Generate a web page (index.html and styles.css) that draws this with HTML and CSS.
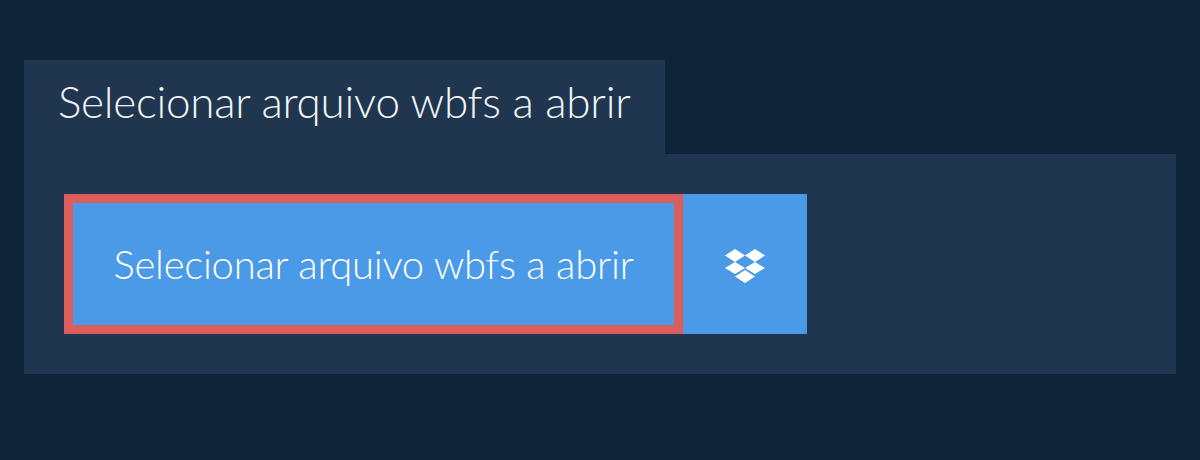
FILE: index.html
```html
<!DOCTYPE html>
<html lang="pt">
<head>
    <meta charset="UTF-8">
    <title>Selecionar arquivo</title>
    <link rel="stylesheet" href="styles.css">
</head>
<body>
    <div class="picker">
        <div class="picker-tab">Selecionar arquivo wbfs a abrir</div>
        <div class="picker-body">
            <button class="select-btn">Selecionar arquivo wbfs a abrir</button>
            <button class="dropbox-btn" aria-label="Dropbox">
                <svg width="40" height="34" viewBox="0 0 40 34">
                    <path fill="#fff" d="M10 0 0 6.5 10 13 20 6.5zM30 0 20 6.5 30 13 40 6.5zM0 19 10 25 20 19 10 13zM30 13 20 19 30 25 40 19zM10 27.5 20 34 30 27.5 20 21z"/>
                </svg>
            </button>
        </div>
    </div>
</body>
</html>
```

FILE: styles.css
```css
body {
    margin: 0;
    height: 460px;
    overflow: hidden;
    background: #0f2439;
    font-family: Lato, sans-serif;
    color: #fff;
}
.picker {
    padding: 60px 24px 0;
}
.picker-tab {
    width: 641px;
    height: 94px;
    box-sizing: border-box;
    padding-left: 34px;
    line-height: 82px;
    font-size: 44px;
    font-weight: 300;
    letter-spacing: -0.24px;
    color: #f1f5f9;
    background: #20364e;
}
.picker-body {
    display: flex;
    height: 220px;
    box-sizing: border-box;
    padding: 40px;
    background: #20364e;
}
button {
    border: none;
    color: #fff;
    font-family: inherit;
    background: #4b9ae8;
}
.select-btn {
    width: 619px;
    height: 140px;
    padding: 0;
    border: 9px solid #dc5e5c;
    font-size: 40px;
    font-weight: 300;
    letter-spacing: -0.23px;
}
.dropbox-btn {
    display: flex;
    align-items: center;
    justify-content: center;
    width: 124px;
    height: 140px;
    padding: 4px 0 0;
}
```
